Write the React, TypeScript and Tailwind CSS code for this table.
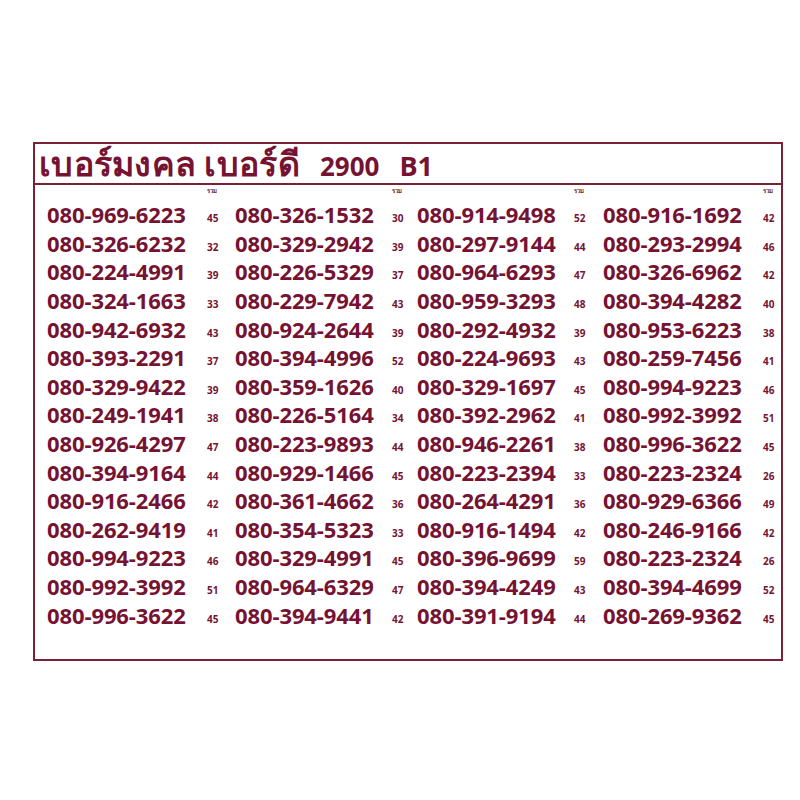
const COLUMNS = [
  [
    ['080-969-6223', 45], ['080-326-6232', 32], ['080-224-4991', 39], ['080-324-1663', 33],
    ['080-942-6932', 43], ['080-393-2291', 37], ['080-329-9422', 39], ['080-249-1941', 38],
    ['080-926-4297', 47], ['080-394-9164', 44], ['080-916-2466', 42], ['080-262-9419', 41],
    ['080-994-9223', 46], ['080-992-3992', 51], ['080-996-3622', 45],
  ],
  [
    ['080-326-1532', 30], ['080-329-2942', 39], ['080-226-5329', 37], ['080-229-7942', 43],
    ['080-924-2644', 39], ['080-394-4996', 52], ['080-359-1626', 40], ['080-226-5164', 34],
    ['080-223-9893', 44], ['080-929-1466', 45], ['080-361-4662', 36], ['080-354-5323', 33],
    ['080-329-4991', 45], ['080-964-6329', 47], ['080-394-9441', 42],
  ],
  [
    ['080-914-9498', 52], ['080-297-9144', 44], ['080-964-6293', 47], ['080-959-3293', 48],
    ['080-292-4932', 39], ['080-224-9693', 43], ['080-329-1697', 45], ['080-392-2962', 41],
    ['080-946-2261', 38], ['080-223-2394', 33], ['080-264-4291', 36], ['080-916-1494', 42],
    ['080-396-9699', 59], ['080-394-4249', 43], ['080-391-9194', 44],
  ],
  [
    ['080-916-1692', 42], ['080-293-2994', 46], ['080-326-6962', 42], ['080-394-4282', 40],
    ['080-953-6223', 38], ['080-259-7456', 41], ['080-994-9223', 46], ['080-992-3992', 51],
    ['080-996-3622', 45], ['080-223-2324', 26], ['080-929-6366', 49], ['080-246-9166', 42],
    ['080-223-2324', 26], ['080-394-4699', 52], ['080-269-9362', 45],
  ],
] as [string, number][][]

// gap between number and its sum, per column
const SUM_OFFSET = ['ml-[18px]', 'ml-[15px]', 'ml-[15px]', 'ml-[18px]']

export default function App() {
  return (
    <div className="w-[800px] h-[800px] bg-white pt-[142px] pl-[33px]" style={{ fontFamily: '"Open Sans", "Noto Sans", sans-serif' }}>
      <div className="w-[750px] h-[519px] border-2 border-[#7a2235] text-[#761232]">
        <div className="h-[41px] border-b-2 border-[#7a2235] flex items-baseline pl-[4px] pt-[2px] font-bold leading-none">
          <span className="text-[34px] tracking-[0.3px]">เบอร์มงคล</span>
          <span className="text-[34px] ml-[8px] tracking-[0.3px]">เบอร์ดี</span>
          <span className="text-[26px] ml-[20px]">2900</span>
          <span className="text-[27px] ml-[20px]">B1</span>
        </div>
        <div className="grid grid-cols-[188px_182px_186px_1fr] pl-[12px]">
          {COLUMNS.map((col, ci) => (
            <div key={ci} className="flex flex-col">
              <div className="h-[15px] flex">
                <span className="w-[142px]" />
                <span className={`${SUM_OFFSET[ci]} text-[6px] leading-none pt-[3px] font-semibold text-[#6a2030]`}>รวม</span>
              </div>
              {col.map(([num, sum], ri) => (
                <div key={ri} className="h-[28.6px] flex items-center">
                  <span className="w-[142px] text-[22px] font-bold leading-none whitespace-nowrap tracking-[-0.1px]">{num}</span>
                  <span className={`${SUM_OFFSET[ci]} text-[10px] font-bold leading-none mt-[8px]`}>{sum}</span>
                </div>
              ))}
            </div>
          ))}
        </div>
      </div>
    </div>
  )
}
